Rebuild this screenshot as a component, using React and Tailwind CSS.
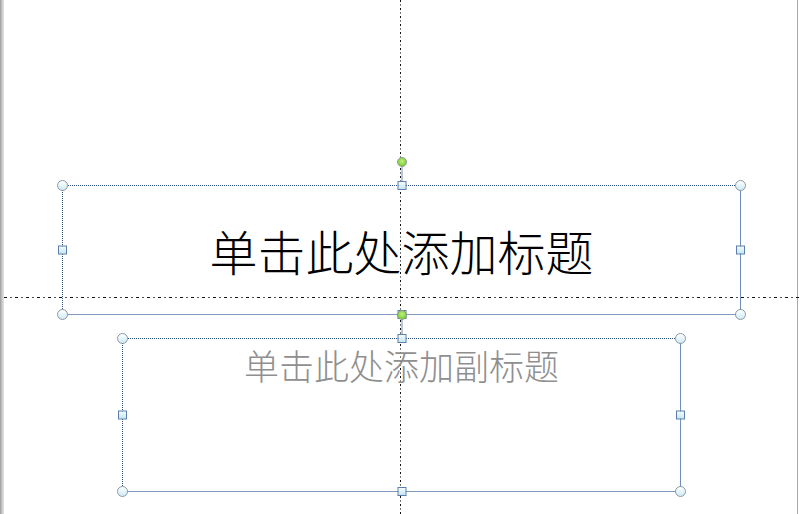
import React from 'react';

const cjk = { fontFamily: '"Noto Sans CJK SC", "Noto Sans", sans-serif' };

const cornerCls =
    'absolute w-[11px] h-[11px] rounded-full border border-[#8b98a6] bg-[linear-gradient(to_bottom,#ffffff,#cdebf5)]';
const sideCls =
    'absolute w-[9px] h-[9px] border border-[#5b7fa8] bg-[linear-gradient(to_bottom,#f4fbfe,#c6e6f3)]';

// Selected placeholder box on the slide, with its eight sizing handles and the rotate knob
const Placeholder = ({ left, top, width, height, children, className = '' }) => (
    <div
        className={`absolute border border-dotted border-[#2c4f7e] ${className}`}
        style={{
            left,
            top,
            width,
            height,
            borderRightStyle: 'solid',
            borderBottomStyle: 'solid',
            borderRightColor: '#6f8fb8',
            borderBottomColor: '#7f9abd'
        }}
    >
        {children}

        {/* rotate knob */}
        <div className="absolute left-1/2 -top-[24px] h-[24px] w-px -translate-x-1/2 bg-[#6f8fb3]" />
        <div className="absolute left-1/2 -top-[29px] w-[10px] h-[10px] -translate-x-1/2 rounded-full border border-[#8a9a8a] bg-[radial-gradient(circle_at_50%_40%,#bdf27f,#69c21c)]" />

        {/* corners */}
        <div className={`${cornerCls} -left-[6px] -top-[6px]`} />
        <div className={`${cornerCls} -right-[6px] -top-[6px]`} />
        <div className={`${cornerCls} -left-[6px] -bottom-[6px]`} />
        <div className={`${cornerCls} -right-[6px] -bottom-[6px]`} />

        {/* sides */}
        <div className={`${sideCls} left-1/2 -top-[5px] -translate-x-1/2`} />
        <div className={`${sideCls} left-1/2 -bottom-[5px] -translate-x-1/2`} />
        <div className={`${sideCls} -left-[5px] top-1/2 -translate-y-1/2`} />
        <div className={`${sideCls} -right-[5px] top-1/2 -translate-y-1/2`} />
    </div>
);

export default function App() {
    return (
        <div className="relative w-[800px] h-[514px] bg-white overflow-hidden">
            {/* window edges */}
            <div className="absolute left-0 top-0 h-full w-[4px] bg-[linear-gradient(to_right,#9a9a9a,#c8c8c8,#e6e6e6)]" />
            <div className="absolute left-[797px] top-0 h-full w-px bg-[#a9a9a9]" />

            {/* guides */}
            <div className="absolute left-[400px] top-0 h-full w-px bg-[repeating-linear-gradient(to_bottom,#111_0_2px,transparent_2px_4px,#777_4px_6px,transparent_6px_8px)]" />
            <div className="absolute top-[297px] left-[4px] right-0 h-px bg-[repeating-linear-gradient(to_right,#111_0_3px,transparent_3px_6px,#555_6px_8px,transparent_8px_11px)]" />

            {/* title placeholder */}
            <Placeholder left={62} top={185} width={679} height={130} className="flex items-center justify-center">
                <span className="text-[48px] leading-none text-black font-light" style={cjk}>
                    单击此处添加标题
                </span>
            </Placeholder>

            {/* subtitle placeholder */}
            <Placeholder left={122} top={338} width={559} height={154} className="flex justify-center pt-[8px]">
                <span className="text-[35px] leading-none text-[#8f8f8f] font-light" style={cjk}>
                    单击此处添加副标题
                </span>
            </Placeholder>
        </div>
    );
}
